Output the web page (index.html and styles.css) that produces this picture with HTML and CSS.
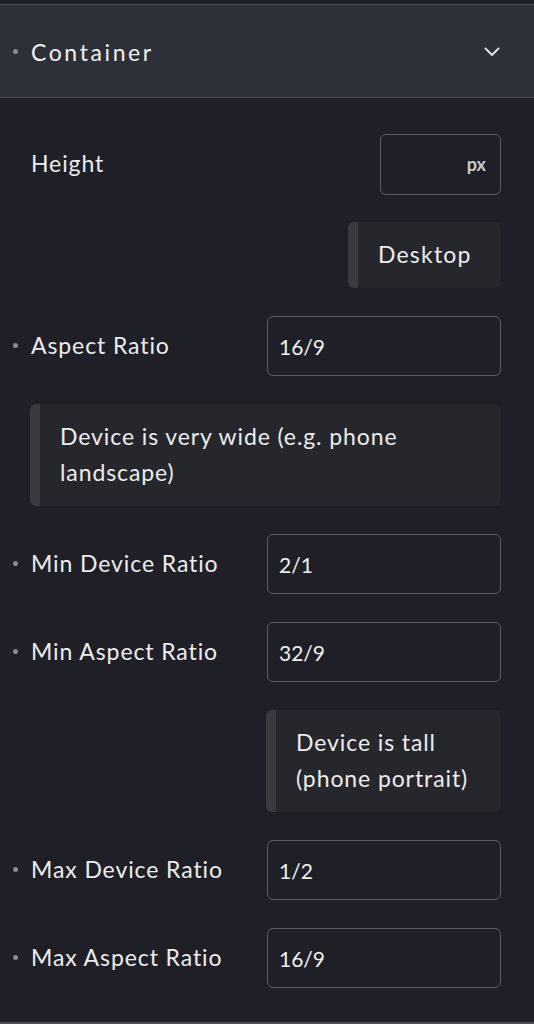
FILE: index.html
```html
<!DOCTYPE html>
<html>
<head>
<meta charset="utf-8">
<link rel="stylesheet" href="styles.css">
</head>
<body>
<div class="panel">
  <div class="header">
    <span class="dot"></span>
    <span class="title">Container</span>
    <svg class="chev" width="16" height="10" viewBox="0 0 16 10"><path d="M1.5 1.5 L8 8 L14.5 1.5" fill="none" stroke="#e6e6e8" stroke-width="1.8" stroke-linecap="round" stroke-linejoin="round"/></svg>
  </div>
  <div class="content">
    <div class="row">
      <div class="label nodot">Height</div>
      <div class="input small"><span class="unit">px</span></div>
    </div>
    <div class="note desktop"><span class="note-text">Desktop</span></div>
    <div class="row">
      <div class="label"><span class="dot"></span>Aspect Ratio</div>
      <div class="input">16/9</div>
    </div>
    <div class="note wide"><span class="note-text">Device is very wide (e.g. phone landscape)</span></div>
    <div class="row">
      <div class="label"><span class="dot"></span>Min Device Ratio</div>
      <div class="input">2/1</div>
    </div>
    <div class="row">
      <div class="label"><span class="dot"></span>Min Aspect Ratio</div>
      <div class="input">32/9</div>
    </div>
    <div class="note tall"><span class="note-text">Device is tall (phone portrait)</span></div>
    <div class="row">
      <div class="label"><span class="dot"></span>Max Device Ratio</div>
      <div class="input">1/2</div>
    </div>
    <div class="row">
      <div class="label"><span class="dot"></span>Max Aspect Ratio</div>
      <div class="input">16/9</div>
    </div>
  </div>
  <div class="bottom-line"></div>
</div>
</body>
</html>
```
FILE: styles.css
```css
html, body {
  margin: 0;
  padding: 0;
  background: #1f2027;
}
body {
  font-family: Lato, "Noto Sans", sans-serif;
  font-variant-ligatures: none;
  color: #ececee;
  width: 534px;
  height: 1024px;
  overflow: hidden;
}
.panel {
  display: flex;
  flex-direction: column;
  height: 1024px;
  padding-top: 4px;
  box-sizing: border-box;
  background: #1f2027;
}
.header {
  display: flex;
  align-items: center;
  height: 92px;
  background: #2d3038;
  border-top: 1px solid #4b4e56;
  border-bottom: 1px solid #4b4e56;
  padding-left: 13px;
  padding-right: 33px;
}
.dot {
  width: 5px;
  height: 5px;
  border-radius: 50%;
  background: #8a8c93;
  flex: none;
  margin-right: 13px;
}
.title {
  font-size: 23px;
  letter-spacing: 2.6px;
  flex: 1;
  color: #f0f0f2;
  padding-top: 1px;
}
.chev {
  margin-right: 1px;
  margin-top: 2px;
}
.content {
  display: flex;
  flex-direction: column;
  align-items: flex-end;
  gap: 28px;
  padding: 36px 33px 0 13px;
  flex: 1;
}
.row {
  display: flex;
  align-items: center;
  justify-content: space-between;
  align-self: stretch;
  height: 60px;
}
.label {
  display: flex;
  align-items: center;
  font-size: 23px;
  letter-spacing: 0.9px;
  padding-bottom: 2px;
}
.label.nodot {
  padding-left: 18px;
}
.input {
  box-sizing: border-box;
  width: 234px;
  height: 60px;
  border: 1.5px solid #5a5d64;
  border-radius: 6px;
  display: flex;
  align-items: center;
  padding-left: 11px;
  font-size: 21px;
  color: #efeff1;
}
.input.small {
  width: 121px;
  height: 61px;
  justify-content: flex-end;
  padding-right: 14px;
}
.unit {
  font-size: 18px;
  font-weight: 700;
  color: #c9cacd;
}
.note {
  box-sizing: border-box;
  background: #26272d;
  border-left: 10px solid #3a3b41;
  border-radius: 6px;
  padding: 14px 20px;
  font-size: 23px;
  line-height: 36px;
  letter-spacing: 0.9px;
}
.note.desktop {
  width: 153px;
  height: 66px;
  display: flex;
  align-items: center;
  padding-top: 0;
  padding-bottom: 2px;
  letter-spacing: 1.2px;
}
.note.wide {
  width: 471px;
  height: 102px;
}
.note.tall {
  width: 235px;
  height: 102px;
}
.bottom-line {
  height: 2px;
  background: #4b4e56;
}
```
